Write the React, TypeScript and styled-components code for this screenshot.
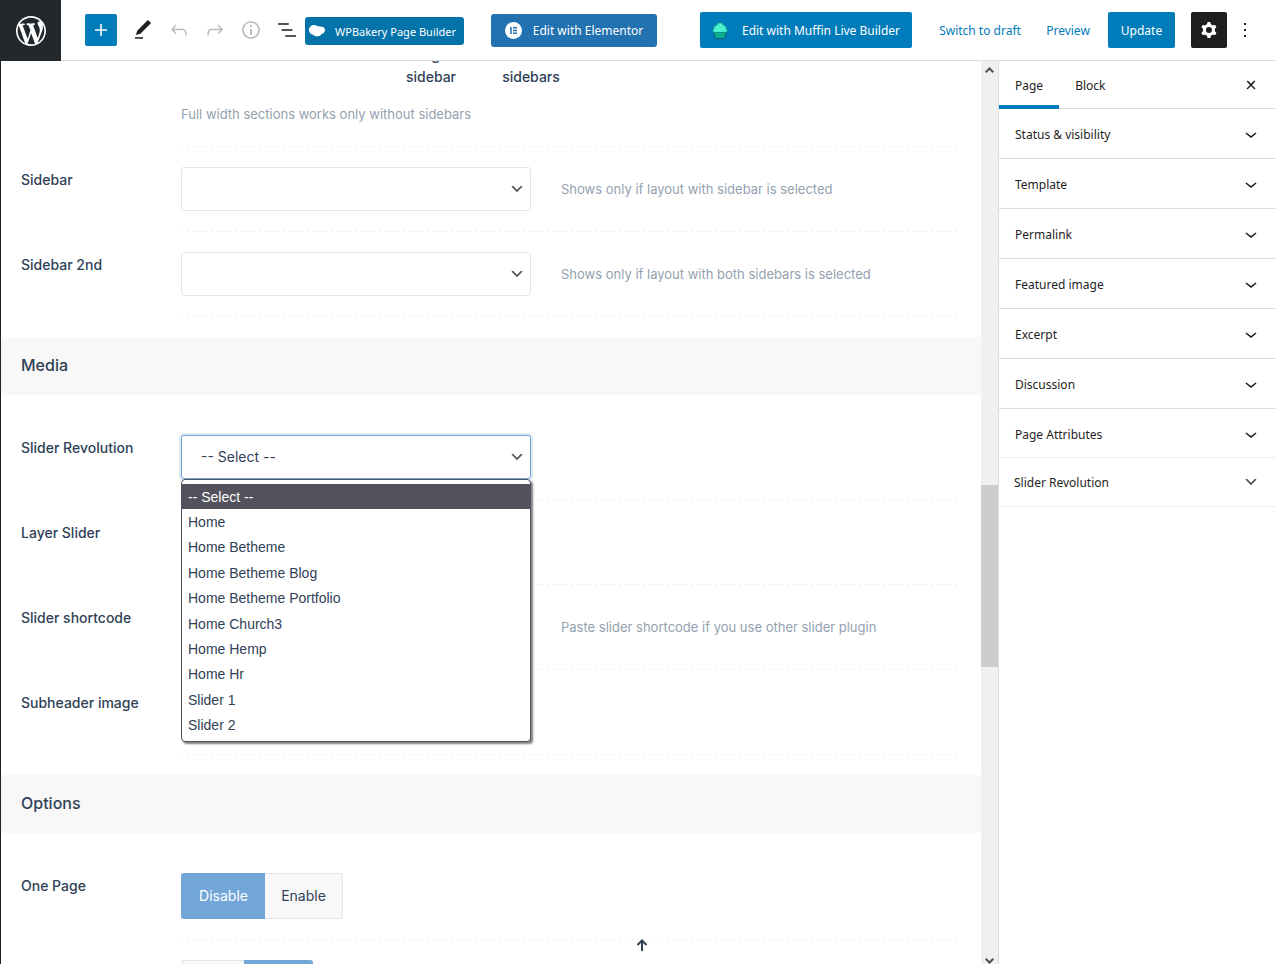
import React from "react";
import styled, { createGlobalStyle, css } from "styled-components";

const color = {
  blue: "#007cba",
  ink: "#1e1e1e",
  label: "#304156",
  hint: "#93a1b0",
  field: "#e1e6eb",
  accent: "#72a5d8",
  line: "#dddddd",
};

const formFont = `Inter, "Open Sans", sans-serif`;
const uiFont = `"Noto Sans", "Open Sans", sans-serif`;

const GlobalStyle = createGlobalStyle`
  *, *::before, *::after { box-sizing: border-box; }
  body { margin: 0; background: #fff; color: ${color.ink}; font: 12px/20px ${uiFont}; }
  button, input, select { font: inherit; color: inherit; margin: 0; }
`;

const Screen = styled.div`
  display: flex;
  flex-direction: column;
  height: 100vh;
  overflow: hidden;
`;

const TopBar = styled.header`
  display: flex;
  flex: none;
  align-items: center;
  height: 61px;
  border-bottom: 1px solid ${color.line};
`;

const SiteLink = styled.a`
  display: flex;
  align-items: center;
  justify-content: center;
  align-self: flex-start;
  flex: none;
  width: 61px;
  height: 61px;
  margin-right: 24px;
  background: #23282d;
  color: #fff;
`;

const IconButton = styled.button<{ $tone?: "solid" | "dark" | "muted"; $size?: number }>`
  display: flex;
  align-items: center;
  justify-content: center;
  flex: none;
  width: ${(p) => p.$size ?? 36}px;
  height: ${(p) => p.$size ?? 36}px;
  padding: 0;
  border: 0;
  border-radius: 2px;
  background: ${(p) => (p.$tone === "solid" ? color.blue : p.$tone === "dark" ? color.ink : "transparent")};
  color: ${(p) => (p.$tone === "solid" || p.$tone === "dark" ? "#fff" : p.$tone === "muted" ? "#bbbbbb" : color.ink)};
`;

const Tools = styled.div`
  display: flex;
  align-items: center;
  margin-left: 8px;
`;

const ActionButton = styled.button<{ $width: number; $height?: number; $bg?: string; $radius?: number }>`
  display: flex;
  align-items: center;
  justify-content: center;
  flex: none;
  width: ${(p) => p.$width}px;
  height: ${(p) => p.$height ?? 36}px;
  padding: 0;
  border: 0;
  border-radius: ${(p) => p.$radius ?? 2}px;
  background: ${(p) => p.$bg ?? color.blue};
  color: #fff;
  white-space: nowrap;
  svg { flex: none; }
  > span { padding-top: 2px; }
`;

const Builders = styled.div`
  display: flex;
  align-items: center;
  gap: 27px;
`;

const Publish = styled.div`
  display: flex;
  align-items: center;
  margin-left: auto;
  padding-right: 13px;
`;

const TextButton = styled.button<{ $width: number }>`
  width: ${(p) => p.$width}px;
  height: 36px;
  padding: 2px 0 0;
  border: 0;
  background: transparent;
  color: ${color.blue};
  white-space: nowrap;
`;

const BakeryButton = styled(ActionButton)`
  gap: 10px;
  justify-content: flex-start;
  margin-top: 2px;
  padding-left: 4px;
  font-size: 11px;
`;

const ElementorButton = styled(ActionButton)`
  gap: 11px;
`;

const MuffinButton = styled(ActionButton)`
  gap: 14px;
  margin-right: 26px;
`;

const UpdateButton = styled(ActionButton)`
  margin: 0 16px 0 18px;
`;

const PublishLinks = styled.div`
  display: flex;
  gap: 24px;
`;

const Body = styled.div`
  display: flex;
  flex: 1;
  min-height: 0;
`;

const Editor = styled.main`
  position: relative;
  flex: 1;
  min-width: 0;
  overflow: hidden;
  border-left: 1px solid #1d2327;
  font-family: ${formFont};
  font-size: 14px;
  color: ${color.label};
`;

const Scrolled = styled.div`
  margin-top: -17px;
`;

const Row = styled.div`
  display: grid;
  grid-template-columns: 160px 1fr;
  row-gap: 20px;
  padding: 20px 20px 0;
  &::after {
    content: "";
    grid-column: 2;
    height: 1px;
    background: repeating-linear-gradient(90deg, #e9ecef 0 2px, transparent 2px 6px);
  }
`;

const LayoutRow = styled(Row)`
  padding-top: 0;
  row-gap: 22px;
`;

const RowLabel = styled.label`
  padding-top: 3px;
  font-weight: 500;
`;

const LayoutChoices = styled.div`
  display: flex;
  gap: 20px;
  padding-left: 210px;
  margin-bottom: 16px;
  line-height: 22px;
`;

const LayoutChoice = styled.span`
  width: 80px;
  text-align: center;
  font-weight: 500;
`;

const Field = styled.div`
  display: flex;
  align-items: center;
  gap: 30px;
`;

const Hint = styled.span`
  font-size: 13px;
  color: ${color.hint};
`;

const SelectBox = styled.div`
  position: relative;
  display: grid;
  grid-template-columns: 1fr 28px;
  align-items: center;
  width: 350px;
  > select { grid-area: 1 / 1 / 2 / 3; }
  > svg { grid-area: 1 / 2; justify-self: center; pointer-events: none; }
`;

const controlStyle = css<{ $open?: boolean }>`
  width: 350px;
  height: 44px;
  padding: 0 19px;
  border: 1px solid ${(p) => (p.$open ? color.accent : color.field)};
  border-radius: 3px;
  background: #fff;
  box-shadow: ${(p) => (p.$open ? "0 0 0 2px #dce9f5" : "none")};
  outline: 0;
`;

const Select = styled.select<{ $open?: boolean }>`
  appearance: none;
  ${controlStyle}
`;

const TextInput = styled.input`
  ${controlStyle}
`;

const Menu = styled.ul`
  position: absolute;
  z-index: 2;
  top: 44px;
  left: 0;
  display: grid;
  grid-auto-rows: 1fr;
  width: 350px;
  height: 263px;
  margin: 0;
  padding: 4px 0 3px;
  list-style: none;
  border: 1px solid #52515c;
  border-radius: 4px;
  background: #fff;
  box-shadow: 2px 2px 2px rgba(0, 0, 0, 0.5);
  font-family: "Liberation Sans", Arial, sans-serif;
`;

const MenuItem = styled.li<{ $active: boolean }>`
  display: flex;
  align-items: center;
  padding: 0 6px;
  background: ${(p) => (p.$active ? "#52515c" : "transparent")};
  color: ${(p) => (p.$active ? "#fff" : color.label)};
`;

const SectionTitle = styled.h2`
  margin: 20px 0;
  padding: 16px 20px 18px;
  background: #f8f8f8;
  font-size: 16px;
  line-height: 24px;
  font-weight: 500;
`;

const Segments = styled.div`
  display: flex;
  height: 46px;
`;

const Segment = styled.label<{ $on: boolean; $width: number }>`
  display: flex;
  align-items: center;
  justify-content: center;
  width: ${(p) => p.$width}px;
  border: 1px solid ${(p) => (p.$on ? color.accent : color.field)};
  background: ${(p) => (p.$on ? color.accent : "#f8f8f8")};
  color: ${(p) => (p.$on ? "#fff" : color.label)};
  &:first-child { border-right: 0; border-radius: 3px 0 0 3px; }
  &:last-child { border-left: 0; border-radius: 0 3px 3px 0; }
  input { appearance: none; width: 0; height: 0; }
`;

const ToTop = styled.button`
  position: absolute;
  z-index: 1;
  bottom: 0;
  left: calc(50% + 131px);
  display: flex;
  justify-content: center;
  width: 40px;
  height: 26px;
  padding: 0;
  border: 0;
  background: rgba(255, 255, 255, 0.7);
  color: ${color.label};
`;

const ScrollTrack = styled.div`
  display: flex;
  flex-direction: column;
  align-items: center;
  flex: none;
  width: 17px;
  overflow: hidden;
  background: #f0f0f0;
  color: #505050;
`;

const ScrollPart = styled.div<{ $grow: number; $thumb?: boolean }>`
  flex: ${(p) => p.$grow} 1 0;
  width: 17px;
  background: ${(p) => (p.$thumb ? "#cdcdcd" : "transparent")};
`;

const ScrollArrow = styled.div<{ $height: number }>`
  display: flex;
  align-items: center;
  flex: none;
  height: ${(p) => p.$height}px;
`;

const Sidebar = styled.aside`
  flex: none;
  width: 278px;
  border-left: 1px solid ${color.line};
`;

const Tabs = styled.div`
  display: flex;
  height: 48px;
  padding-right: 7px;
  border-bottom: 1px solid ${color.line};
`;

const Tab = styled.button<{ $active?: boolean }>`
  height: 48px;
  padding: 2px 16px 0;
  border: 0;
  background: transparent;
  box-shadow: ${(p) => (p.$active ? `inset 0 -4px 0 ${color.blue}` : "none")};
`;

const TabClose = styled(IconButton)`
  align-self: center;
  margin-left: auto;
`;

const Panel = styled.button`
  display: flex;
  align-items: center;
  justify-content: space-between;
  width: 100%;
  height: 50px;
  padding: 0 13px 0 16px;
  border: 0;
  border-bottom: 1px solid ${color.line};
  background: transparent;
  text-align: left;
  > span { padding-top: 2px; }
  &:nth-last-child(2) { border-color: transparent; }
`;

const MetaPanel = styled(Panel)`
  margin-top: -2px;
  padding: 0 17px 0 15px;
  border-top: 1px solid #eeeeee;
  border-bottom-color: #eeeeee;
`;

const icons = {
  plus: "M18 11.2h-5.2V6h-1.6v5.2H6v1.6h5.2V18h1.6v-5.2H18z",
  edit: "M20.1 5.1L16.9 2 6.2 12.7l-1.3 4.4 4.5-1.3L20.1 5.1zM4 20.8h8v-1.5H4v1.5z",
  undo: "M18.3 11.7c-.6-.6-1.4-.9-2.3-.9H6.7l2.9-3.3-1.1-1-4.5 5L8.5 16l1-1-2.7-2.7H16c.5 0 .9.2 1.3.5 1 1 1 3.4 1 4.5v.3h1.5v-.2c0-1.5 0-4.3-1.5-5.7z",
  redo: "M15.6 6.5l-1.1 1 2.9 3.3H8c-.9 0-1.7.3-2.3.9-1.4 1.5-1.4 4.2-1.4 5.6v.2h1.5v-.3c0-1.1 0-3.5 1-4.5.3-.3.7-.5 1.3-.5h9.2L14.5 15l1.1 1.1 4.6-4.6-4.6-5z",
  info: "M12 3.2c-4.8 0-8.8 3.9-8.8 8.8 0 4.8 3.9 8.8 8.8 8.8 4.8 0 8.8-3.9 8.8-8.8 0-4.8-4-8.8-8.8-8.8zm0 16c-4 0-7.2-3.3-7.2-7.2C4.8 8 8 4.8 12 4.8s7.2 3.3 7.2 7.2c0 4-3.2 7.2-7.2 7.2zM11 17h2v-6h-2v6zm0-8h2V7h-2v2z",
  list: "M13.8 5.2H3v1.5h10.8V5.2zm-3.6 12v1.5H21v-1.5H10.2zm7.2-6H6.6v1.5h10.8v-1.5z",
  cog: "M10.289 4.836A1 1 0 0111.275 4h1.306a1 1 0 01.987.836l.244 1.466c.787.26 1.503.679 2.108 1.218l1.393-.522a1 1 0 011.216.437l.653 1.13a1 1 0 01-.23 1.273l-1.148.944a6.025 6.025 0 010 2.435l1.149.946a1 1 0 01.23 1.272l-.653 1.13a1 1 0 01-1.216.437l-1.394-.522c-.605.54-1.32.958-2.108 1.218l-.244 1.466a1 1 0 01-.987.836h-1.306a1 1 0 01-.986-.836l-.244-1.466a5.995 5.995 0 01-2.108-1.218l-1.394.522a1 1 0 01-1.217-.436l-.653-1.131a1 1 0 01.23-1.272l1.149-.946a6.026 6.026 0 010-2.435l-1.148-.944a1 1 0 01-.23-1.272l.653-1.131a1 1 0 011.217-.437l1.393.522a5.994 5.994 0 012.108-1.218l.244-1.466zM14.929 12a3 3 0 11-6 0 3 3 0 016 0z",
  more: "M13 19h-2v-2h2v2zm0-6h-2v-2h2v2zm0-6h-2V5h2v2z",
  chevron: "M17.5 11.6L12 16l-5.5-4.4.9-1.2L12 14l4.5-3.6 1 1.2z",
  close: "M13 11.9l3.3-3.4-1.1-1-3.2 3.3-3.2-3.3-1.1 1 3.3 3.4-3.5 3.6 1 1L12 13l3.5 3.5 1-1z",
};

const Icon = ({ name }: { name: keyof typeof icons }) => (
  <svg width="24" height="24" viewBox="0 0 24 24" fill="currentColor" fillRule="evenodd" aria-hidden="true">
    <path d={icons[name]} />
  </svg>
);

const SelectArrow = () => (
  <svg width="16" height="16" viewBox="0 0 20 20" fill="#555" aria-hidden="true">
    <path d="M5 6l5 5 5-5 2 1-7 7-7-7 2-1z" />
  </svg>
);

const WordPressLogo = () => (
  <svg width="36" height="36" viewBox="-2 -2 24 24" fill="currentColor" aria-hidden="true">
    <path d="M20 10c0-5.51-4.49-10-10-10C4.48 0 0 4.49 0 10c0 5.52 4.48 10 10 10 5.51 0 10-4.48 10-10zM7.78 15.37L4.37 6.22c.55-.02 1.17-.08 1.17-.08.5-.06.44-1.13-.06-1.11 0 0-1.45.11-2.37.11-.18 0-.37 0-.58-.01C4.12 2.69 6.87 1.11 10 1.11c2.33 0 4.45.87 6.05 2.34-.68-.11-1.65.39-1.65 1.58 0 .74.45 1.36.9 2.1.35.61.55 1.36.55 2.46 0 1.49-1.4 5-1.4 5l-3.03-8.37c.54-.02.82-.17.82-.17.5-.05.44-1.25-.06-1.22 0 0-1.44.12-2.38.12-.87 0-2.33-.12-2.33-.12-.5-.03-.56 1.2-.06 1.22l.92.08 1.26 3.41zM17.41 10c.24-.64.74-1.87.43-4.25.7 1.29 1.05 2.71 1.05 4.25 0 3.29-1.73 6.24-4.4 7.78.97-2.59 1.94-5.2 2.92-7.78zM6.1 18.09C3.12 16.65 1.11 13.53 1.11 10c0-1.3.23-2.48.72-3.59C3.25 10.3 4.67 14.2 6.1 18.09zm4.03-6.63l2.58 6.98c-.86.29-1.76.45-2.71.45-.79 0-1.57-.11-2.29-.33.81-2.38 1.62-4.74 2.42-7.1z" />
  </svg>
);

const BakeryLogo = () => (
  <svg width="16" height="12" viewBox="0 0 16 12" fill="#fff" aria-hidden="true">
    <path d="M5 0C7 0 8.300 .8 9 1.800C10 1 11.400 1.200 12 1.800C14.400 1.400 16 3 16 5C16 7.400 14.300 8.900 12.300 9C12 10.500 10.500 11.400 9 11L7.800 11.700L7 10.900C5.500 11.300 4.600 10.600 4.200 9.800C1.700 9.500 0 7.500 0 5C0 2.200 2.200 0 5 0Z" />
  </svg>
);

const ElementorLogo = () => (
  <svg width="17" height="17" viewBox="0 0 17 17" aria-hidden="true">
    <circle cx="8.5" cy="8.5" r="8.5" fill="#fff" />
    <path d="M5.200 5H6.700V12H5.200ZM8 5H12V6.400H8ZM8 7.800H12V9.200H8ZM8 10.600H12V12H8Z" fill="#2271b1" />
  </svg>
);

const MuffinLogo = () => (
  <svg width="16" height="17" viewBox="0 0 16 17" strokeLinejoin="round" aria-hidden="true">
    <path d="M2 10.500H14L12.800 15.400Q12.600 16.300 11.600 16.300H4.400Q3.400 16.300 3.200 15.400Z" fill="#0cb795" stroke="#0a5c60" />
    <path d="M5.500 11.500L6 15.500M8 11.500V15.500M10.500 11.500L10 15.500" stroke="#0aa98a" fill="none" />
    <path d="M2 10.500C.4 10 .2 7.700 1.600 6.800C1.400 4.700 3 3.400 4.500 3.300C5.300 1.300 6.600 .7 8 .7S10.700 1.300 11.500 3.300C13 3.400 14.600 4.700 14.400 6.800C15.800 7.700 15.600 10 14 10.500Z" fill="#3ef0cb" stroke="#12888a" strokeWidth=".8" />
    <path d="M5 5.500h1M8 3.500h1M10.500 6h1M7.500 7.500h1M4 8.500h1" stroke="#c8fff2" />
  </svg>
);

const ScrollChevron = ({ down }: { down?: boolean }) => (
  <svg width="9" height="6" viewBox="0 0 9 6" fill="none" stroke="currentColor" strokeWidth="2" aria-hidden="true">
    <path d={down ? "M.7 .7L4.500 4.500L8.300 .7" : "M.7 5.300L4.500 1.500L8.300 5.300"} />
  </svg>
);

const sliders = [
  "-- Select --",
  "Home",
  "Home Betheme",
  "Home Betheme Blog",
  "Home Betheme Portfolio",
  "Home Church3",
  "Home Hemp",
  "Home Hr",
  "Slider 1",
  "Slider 2",
];

const panels = [
  "Status & visibility",
  "Template",
  "Permalink",
  "Featured image",
  "Excerpt",
  "Discussion",
  "Page Attributes",
];

type SelectRowProps = { id: string; label: string; hint?: string; options?: string[]; open?: boolean };

const SelectRow = ({ id, label, hint, options, open }: SelectRowProps) => (
  <Row>
    <RowLabel htmlFor={id}>{label}</RowLabel>
    <Field>
      <SelectBox>
        <Select id={id} $open={open}>
          {(options ?? [""]).map((o) => (
            <option key={o}>{o}</option>
          ))}
        </Select>
        <SelectArrow />
        {open && (
          <Menu role="listbox" aria-label={label}>
            {options?.map((o, i) => (
              <MenuItem key={o} role="option" aria-selected={i === 0} $active={i === 0}>
                {o}
              </MenuItem>
            ))}
          </Menu>
        )}
      </SelectBox>
      {hint && <Hint>{hint}</Hint>}
    </Field>
  </Row>
);

const InputRow = ({ id, label, hint }: { id: string; label: string; hint?: string }) => (
  <Row>
    <RowLabel htmlFor={id}>{label}</RowLabel>
    <Field>
      <TextInput id={id} type="text" />
      {hint && <Hint>{hint}</Hint>}
    </Field>
  </Row>
);

export default function App() {
  return (
    <Screen>
      <GlobalStyle />
      <TopBar>
        <SiteLink href="#" aria-label="WordPress">
          <WordPressLogo />
        </SiteLink>
        <IconButton $tone="solid" $size={32} aria-label="Add block"><Icon name="plus" /></IconButton>
        <Tools>
          <IconButton aria-label="Edit"><Icon name="edit" /></IconButton>
          <IconButton $tone="muted" aria-label="Undo"><Icon name="undo" /></IconButton>
          <IconButton $tone="muted" aria-label="Redo"><Icon name="redo" /></IconButton>
          <IconButton $tone="muted" aria-label="Details"><Icon name="info" /></IconButton>
          <IconButton aria-label="List view"><Icon name="list" /></IconButton>
        </Tools>
        <Builders>
          <BakeryButton $width={159} $height={28} $bg="#0473aa" $radius={3}>
            <BakeryLogo />
            <span>WPBakery Page Builder</span>
          </BakeryButton>
          <ElementorButton $width={166} $height={33} $bg="#2271b1" $radius={3}>
            <ElementorLogo />
            <span>Edit with Elementor</span>
          </ElementorButton>
        </Builders>
        <Publish>
          <MuffinButton $width={212}>
            <MuffinLogo />
            <span>Edit with Muffin Live Builder</span>
          </MuffinButton>
          <PublishLinks>
            <TextButton $width={84}>Switch to draft</TextButton>
            <TextButton $width={44}>Preview</TextButton>
          </PublishLinks>
          <UpdateButton $width={67}><span>Update</span></UpdateButton>
          <IconButton $tone="dark" aria-label="Settings"><Icon name="cog" /></IconButton>
          <IconButton aria-label="Options"><Icon name="more" /></IconButton>
        </Publish>
      </TopBar>
      <Body>
        <Editor>
          <Scrolled>
            <LayoutRow>
              <span />
              <div>
                <LayoutChoices>
                  <LayoutChoice>Single sidebar</LayoutChoice>
                  <LayoutChoice>Both sidebars</LayoutChoice>
                </LayoutChoices>
                <Hint>Full width sections works only without sidebars</Hint>
              </div>
            </LayoutRow>
            <SelectRow id="sidebar" label="Sidebar" hint="Shows only if layout with sidebar is selected" />
            <SelectRow id="sidebar-2" label="Sidebar 2nd" hint="Shows only if layout with both sidebars is selected" />
            <SectionTitle>Media</SectionTitle>
            <SelectRow id="slider-revolution" label="Slider Revolution" options={sliders} open />
            <SelectRow id="layer-slider" label="Layer Slider" />
            <InputRow id="slider-shortcode" label="Slider shortcode" hint="Paste slider shortcode if you use other slider plugin" />
            <InputRow id="subheader-image" label="Subheader image" />
            <SectionTitle>Options</SectionTitle>
            <Row>
              <RowLabel as="span" id="one-page">One Page</RowLabel>
              <Segments role="radiogroup" aria-labelledby="one-page">
                <Segment $on $width={84}><input type="radio" name="one-page" defaultChecked />Disable</Segment>
                <Segment $on={false} $width={78}><input type="radio" name="one-page" />Enable</Segment>
              </Segments>
            </Row>
            <Row>
              <span />
              <Segments role="radiogroup">
                <Segment $on={false} $width={63}><input type="radio" name="next" aria-label="Off" /></Segment>
                <Segment $on $width={69}><input type="radio" name="next" aria-label="On" defaultChecked /></Segment>
              </Segments>
            </Row>
          </Scrolled>
          <ToTop aria-label="Back to top">
            <svg width="12" height="14" viewBox="0 0 12 14" fill="none" stroke="currentColor" strokeWidth="2" aria-hidden="true">
              <path d="M6 13V3M1.500 7L6 2.500L10.500 7" />
            </svg>
          </ToTop>
        </Editor>
        <ScrollTrack aria-hidden="true">
          <ScrollArrow $height={17}><ScrollChevron /></ScrollArrow>
          <ScrollPart $grow={407} />
          <ScrollPart $grow={182} $thumb />
          <ScrollPart $grow={291} />
          <ScrollArrow $height={6}><ScrollChevron down /></ScrollArrow>
        </ScrollTrack>
        <Sidebar>
          <Tabs>
            <Tab $active>Page</Tab>
            <Tab>Block</Tab>
            <TabClose aria-label="Close settings"><Icon name="close" /></TabClose>
          </Tabs>
          {panels.map((p) => (
            <Panel key={p}>
              <span>{p}</span>
              <Icon name="chevron" />
            </Panel>
          ))}
          <MetaPanel>
            <span>Slider Revolution</span>
            <SelectArrow />
          </MetaPanel>
        </Sidebar>
      </Body>
    </Screen>
  );
}
